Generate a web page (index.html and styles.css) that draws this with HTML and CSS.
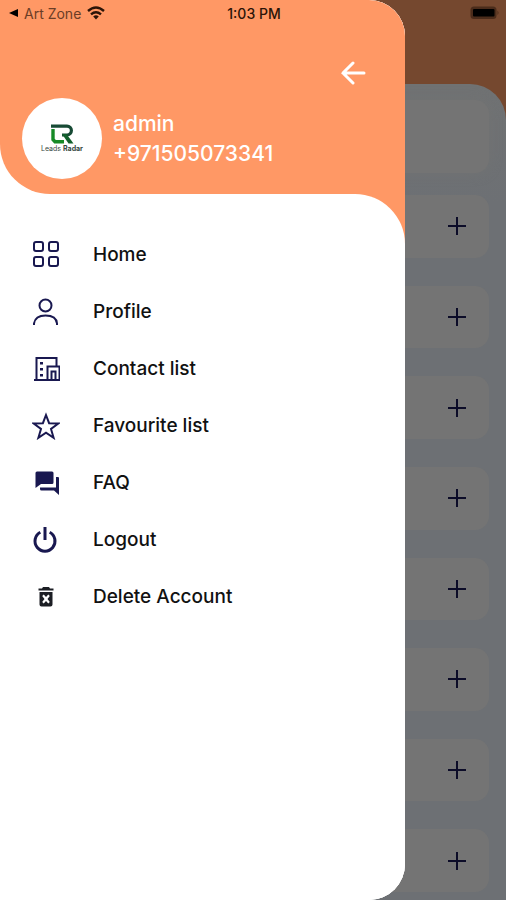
FILE: index.html
```html
<!DOCTYPE html>
<html lang="en">
<head>
<meta charset="utf-8">
<meta name="viewport" content="width=device-width, initial-scale=1">
<title>Leads Radar</title>
<link rel="stylesheet" href="styles.css">
</head>
<body>
<div class="app">
  <main class="page">
    <div class="sheet">
      <section class="summary"></section>
      <div class="cards">
        <div class="card"><button class="add" aria-label="Add"><svg viewBox="0 0 18 18"><path d="M9 0v18M0 9h18"/></svg></button></div>
        <div class="card"><button class="add" aria-label="Add"><svg viewBox="0 0 18 18"><path d="M9 0v18M0 9h18"/></svg></button></div>
        <div class="card"><button class="add" aria-label="Add"><svg viewBox="0 0 18 18"><path d="M9 0v18M0 9h18"/></svg></button></div>
        <div class="card"><button class="add" aria-label="Add"><svg viewBox="0 0 18 18"><path d="M9 0v18M0 9h18"/></svg></button></div>
        <div class="card"><button class="add" aria-label="Add"><svg viewBox="0 0 18 18"><path d="M9 0v18M0 9h18"/></svg></button></div>
        <div class="card"><button class="add" aria-label="Add"><svg viewBox="0 0 18 18"><path d="M9 0v18M0 9h18"/></svg></button></div>
        <div class="card"><button class="add" aria-label="Add"><svg viewBox="0 0 18 18"><path d="M9 0v18M0 9h18"/></svg></button></div>
        <div class="card"><button class="add" aria-label="Add"><svg viewBox="0 0 18 18"><path d="M9 0v18M0 9h18"/></svg></button></div>
      </div>
    </div>
  </main>

  <aside class="drawer">
    <div class="header-wrap">
      <header class="header">
        <button class="back" aria-label="Close menu">
          <svg viewBox="0 0 26 24"><path d="M24 12H3M13 2L3 12l10 10"/></svg>
        </button>
        <div class="user">
          <div class="avatar">
            <svg class="logo" viewBox="0 0 24 20">
              <path d="M1 2.200H17a4.400 4.400 0 0 1 0 8.800H12" fill="none" stroke="#174a35" stroke-width="3.200"/>
              <path d="M3 5V15.500L5 17.700H14" fill="none" stroke="#168a27" stroke-width="3.400"/>
              <path d="M12 10H16.500L23.500 19.400H18.500z" fill="#12602c"/>
            </svg>
            <div class="brand">Leads <b>Radar</b></div>
          </div>
          <div class="identity">
            <div>admin</div>
            <div>+971505073341</div>
          </div>
        </div>
      </header>
    </div>
    <div class="menu-wrap">
      <nav class="menu">
        <a class="item" href="#home">
          <svg class="icon" viewBox="0 0 28 28"><g class="line"><rect x="2" y="1" width="9" height="9" rx="2"/><rect x="17" y="1" width="9" height="9" rx="2"/><rect x="2" y="16" width="9" height="9" rx="2"/><rect x="17" y="16" width="9" height="9" rx="2"/></g></svg>
          Home</a>
        <a class="item" href="#profile">
          <svg class="icon" viewBox="0 0 28 28"><g class="line"><circle cx="13.500" cy="7.500" r="6"/><path d="M2 27v-1.500C3 19.500 8 17.500 13.500 17.500S24.500 19.500 25 25.500V27"/></g></svg>
          Profile</a>
        <a class="item" href="#contacts">
          <svg class="icon" viewBox="0 0 28 28"><g class="line"><path d="M2 25h27M4.500 25V3h20v8M15.500 25V11.500h12V25M19.500 25v-8.500h4V25"/></g><path d="M8 7h3v2.500H8zM8 13h3v2.500H8zM8 19h3v2.500H8z"/></svg>
          Contact list</a>
        <a class="item" href="#favourites">
          <svg class="icon" viewBox="0 0 28 28"><path class="line" stroke-linejoin="miter" d="M14 3l3.100 8.200 9.200.3-7.300 5.500 2.600 8.800L14 20.700l-7.600 5.100L9 17 1.700 11.500l9.200-.3z"/></svg>
          Favourite list</a>
        <a class="item" href="#faq">
          <svg class="icon" viewBox="0 0 28 28"><path d="M5 2.500h15q1.500 0 1.500 1.500v9.500q0 1.500-1.500 1.500H9l-5.500 4V4q0-1.500 1.500-1.500zM24 8h2q1 0 1 1.200V26l-5-4.500H9.500q-1.500 0-1.500-1.500v-1.500h16z"/></svg>
          FAQ</a>
        <a class="item" href="#logout">
          <svg class="icon" viewBox="0 0 28 28"><g class="power"><path d="M13 1v13M8.300 6.300A10 10 0 1 0 17.700 6.300"/></g></svg>
          Logout</a>
        <a class="item" href="#delete">
          <svg class="icon dark" viewBox="0 0 28 28"><path fill-rule="evenodd" d="M11 4h6l1 1.500h3.500V7.500H6.500V5.500H10zM7.500 9h13v12.500q0 2-2 2h-9q-2 0-2-2zM10.200 13l2.300 3-2.300 3 1.500 1.500 2.300-2.500 2.300 2.500 1.500-1.500-2.300-3 2.300-3-1.500-1.500-2.300 2.500-2.300-2.500z"/></svg>
          Delete Account</a>
      </nav>
    </div>
  </aside>

  <div class="status">
    <div class="carrier">
      <svg class="caret" viewBox="0 0 9 8"><path d="M9 0v8L0 4z"/></svg>
      <span>Art Zone</span>
      <svg class="wifi" viewBox="0 0 18 14"><path d="M1 5Q9-2 17 5M4 8.300Q9 4 14 8.300" fill="none" stroke="#2b1408" stroke-width="2.400"/><path d="M6.200 10.500Q9 8.200 11.800 10.500L9 13.500z"/></svg>
    </div>
    <time>1:03 PM</time>
    <svg class="battery" viewBox="0 0 29 14"><rect x=".5" y=".5" width="26" height="12.500" rx="3.500" fill="#4b2c1b"/><path d="M27.500 4.500q2 2.300 0 4.600z" fill="#4b2c1b"/><rect x="3" y="3" width="21.500" height="7.500" rx="1"/></svg>
  </div>
</div>
</body>
</html>
```
FILE: styles.css
```css
* {
  box-sizing: border-box;
}

body {
  margin: 0;
  font-family: Inter, "Liberation Sans", sans-serif;
}

button {
  padding: 0;
  border: 0;
  background: none;
}

svg {
  display: block;
}

.app {
  display: grid;
  min-height: 100vh;
}

.page,
.drawer,
.status {
  grid-area: 1 / 1;
}

/* Dimmed page behind the drawer */
.page {
  display: flex;
  padding-top: 84px;
  background: #75482f;
}

.sheet {
  flex: 1;
  display: flex;
  flex-direction: column;
  gap: 22px;
  padding: 16px 17px 8px;
  border-radius: 36px 36px 0 0;
  background: linear-gradient(#707273, #6d7074 120px);
}

.summary {
  height: 73px;
  border-radius: 14px;
  background: #747474;
  box-shadow: 0 0 12px #727373;
}

.cards {
  flex: 1;
  display: grid;
  grid-auto-rows: 1fr;
  gap: 28px;
}

.card {
  display: flex;
  align-items: center;
  justify-content: flex-end;
  padding-right: 23px;
  border-radius: 14px;
  background: #747474;
}

.add svg {
  width: 18px;
  height: 18px;
  stroke: #0c0c28;
  stroke-width: 2;
}

/* Drawer */
.drawer {
  display: flex;
  flex-direction: column;
  width: 80%;
  overflow: hidden;
  border-radius: 0 36px 36px 0;
  background: #fff;
}

.header-wrap {
  background: #fff;
}

.header {
  display: flex;
  flex-direction: column;
  gap: 13px;
  padding: 61px 39px 15px 22px;
  border-bottom-left-radius: 50px;
  background: #ff9865;
}

.back {
  align-self: flex-end;
}

.back svg {
  width: 26px;
  height: 24px;
  fill: none;
  stroke: #fff;
  stroke-width: 3;
  stroke-linecap: round;
}

.user {
  display: flex;
  align-items: center;
  gap: 11px;
}

.avatar {
  display: flex;
  flex-direction: column;
  align-items: center;
  justify-content: center;
  width: 80px;
  height: 81px;
  border-radius: 50%;
  background: #fff;
}

.logo {
  width: 24px;
  height: 20px;
}

.brand {
  font-size: 7px;
  line-height: 10px;
  color: #34453e;
}

.identity {
  font-size: 21px;
  font-weight: 500;
  line-height: 30px;
  color: #fff;
}

.menu-wrap {
  flex: 1;
  background: linear-gradient(#ff9865 50px, #fff 50px);
}

.menu {
  display: flex;
  flex-direction: column;
  height: 100%;
  padding: 32px;
  border-top-right-radius: 50px;
  background: #fff;
}

.item {
  display: flex;
  align-items: center;
  gap: 33px;
  height: 57px;
  font-size: 19px;
  font-weight: 500;
  color: #111;
  text-decoration: none;
}

.icon {
  width: 28px;
  height: 28px;
  fill: #191850;
}

.icon .line,
.icon .power {
  fill: none;
  stroke: #191850;
  stroke-width: 2;
}

.icon .power {
  stroke-width: 3;
}

.icon.dark {
  fill: #1c1e24;
}

/* Status bar */
.status {
  display: grid;
  grid-template-columns: 1fr auto 1fr;
  align-items: center;
  align-self: start;
  z-index: 1;
  height: 26px;
  padding: 0 7px 0 9px;
  font-size: 14px;
  font-weight: 500;
  color: #2b1408;
}

.carrier {
  display: flex;
  align-items: center;
  gap: 6px;
  font-weight: 400;
  color: #6b3d26;
}

.caret {
  width: 9px;
  height: 8px;
}

.wifi {
  width: 18px;
  height: 14px;
  fill: #2b1408;
}

.battery {
  justify-self: end;
  width: 29px;
  height: 14px;
}
```
